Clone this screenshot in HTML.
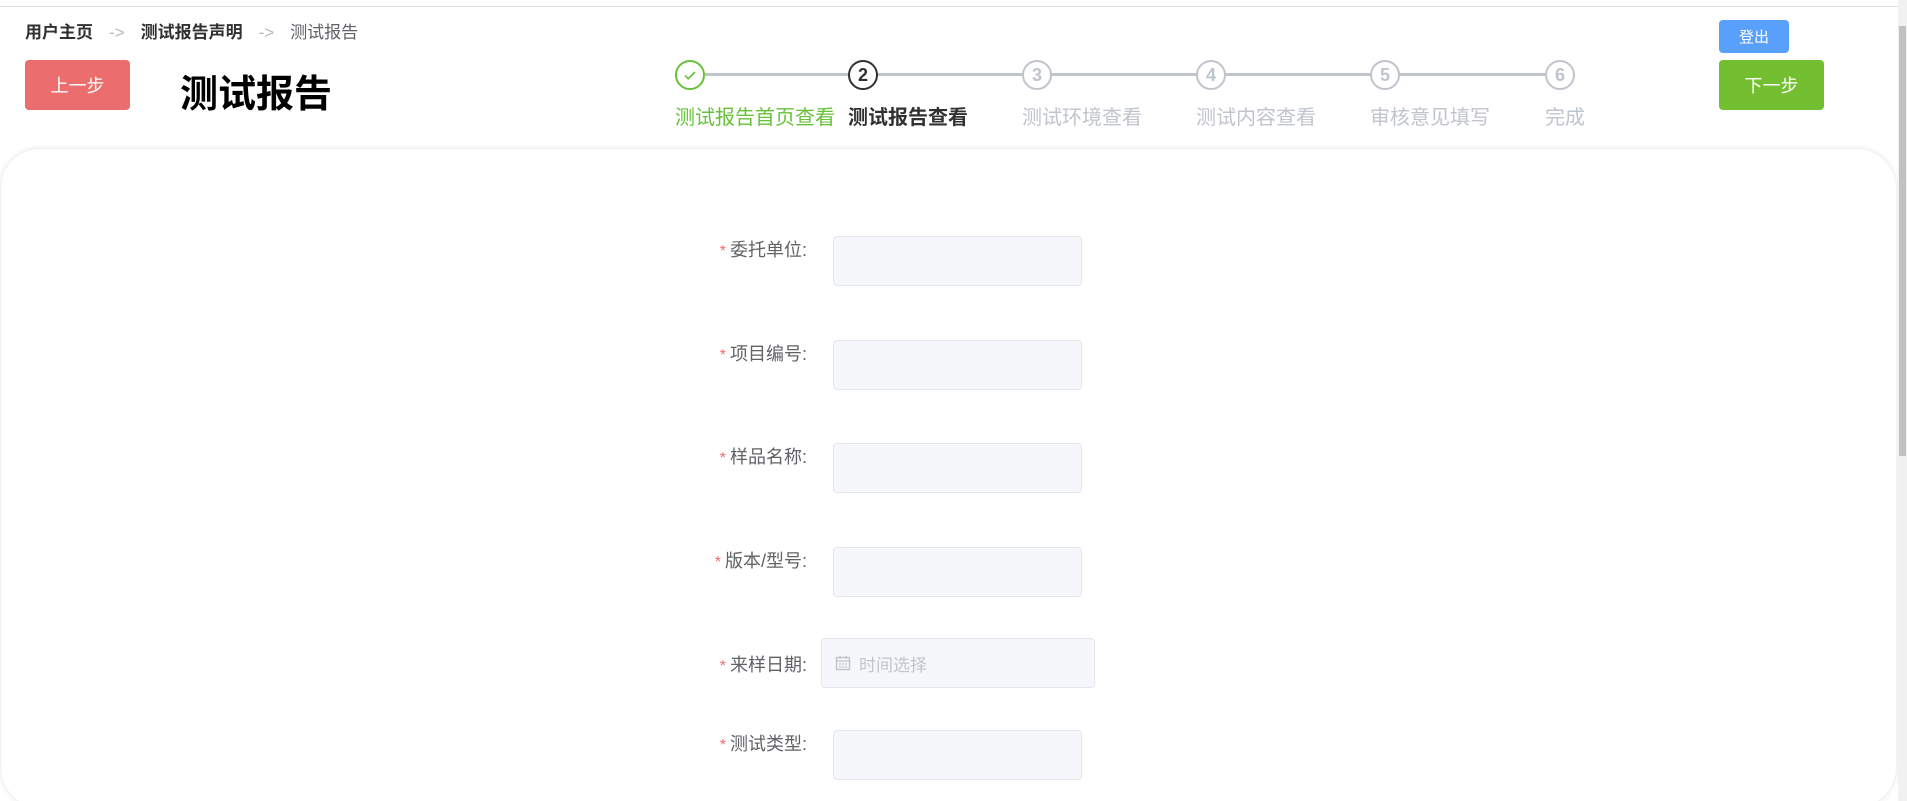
<!DOCTYPE html>
<html><head><meta charset="utf-8"><style>
*{margin:0;padding:0;box-sizing:border-box}
html,body{width:1907px;height:801px;overflow:hidden}
body{background:#fff;font-family:"Liberation Sans","Noto Sans CJK SC",sans-serif;position:relative}
.abs{position:absolute}
.topline{left:0;top:6px;width:1898px;height:1px;background:#ddd}
.bc{left:25px;top:18px;font-size:17px;color:#303133;white-space:nowrap}
.bc b{font-weight:bold}
.bc .ar{color:#b4b8c0;margin:0 16px}
.bc .cur{color:#606266}
.btn{color:#fff;border-radius:4px;display:flex;align-items:center;justify-content:center;font-size:18px}
.title{left:180px;top:63px;font-size:38px;font-weight:bold;color:#000}
.line{height:3px;background:#c0c4cc;top:73px}
.circ{width:30px;height:30px;border-radius:50%;border:2px solid #c0c4cc;top:60px;background:#fff;color:#c0c4cc;font-weight:bold;font-size:18px;display:flex;align-items:center;justify-content:center}
.lab{top:101px;font-size:20px;color:#c0c4cc;white-space:nowrap}
.card{left:0;top:148px;width:1897px;height:660px;border-radius:40px;box-shadow:0 0 6px rgba(0,0,0,0.08);border:1px solid #f0f0f0}
.fl{font-size:18px;color:#606266;text-align:right;width:200px;left:607px}
.fl i{color:#f56c6c;font-style:normal;margin-right:4px;font-size:16px}
.in{left:833px;width:249px;height:50px;background:#f5f7fa;border:1px solid #e4e7ed;border-radius:4px}
.sb{left:1898px;top:0;width:9px;height:801px;background:#f1f1f1}
.th{left:1899px;top:26px;width:7px;height:430px;background:#c1c1c1}
</style></head><body>
<div class="abs topline"></div>
<div class="abs bc"><b>用户主页</b><span class="ar">-&gt;</span><b>测试报告声明</b><span class="ar">-&gt;</span><span class="cur">测试报告</span></div>
<div class="abs btn" style="left:25px;top:60px;width:105px;height:50px;background:#ec6d6d">上一步</div>
<div class="abs title">测试报告</div>
<div class="abs line" style="left:705px;width:840px"></div>
<div class="abs circ" style="left:675px;border-color:#67c23a;color:#67c23a"><svg width="16" height="16" viewBox="0 0 16 16"><path d="M3 8.5l3.2 3.2L13 5" fill="none" stroke="#67c23a" stroke-width="1.6"/></svg></div>
<div class="abs circ" style="left:848px;border-color:#303133;color:#303133">2</div>
<div class="abs circ" style="left:1022px">3</div>
<div class="abs circ" style="left:1196px">4</div>
<div class="abs circ" style="left:1370px">5</div>
<div class="abs circ" style="left:1545px">6</div>
<div class="abs lab" style="left:675px;color:#67c23a">测试报告首页查看</div>
<div class="abs lab" style="left:848px;color:#303133;font-weight:bold">测试报告查看</div>
<div class="abs lab" style="left:1022px">测试环境查看</div>
<div class="abs lab" style="left:1196px">测试内容查看</div>
<div class="abs lab" style="left:1370px">审核意见填写</div>
<div class="abs lab" style="left:1545px">完成</div>
<div class="abs btn" style="left:1719px;top:20px;width:70px;height:33px;background:#58a0fb;font-size:15px">登出</div>
<div class="abs btn" style="left:1719px;top:60px;width:105px;height:50px;background:#73bf31">下一步</div>
<div class="abs card"></div>
<div class="abs fl" style="top:236px"><i>*</i>委托单位:</div>
<div class="abs in" style="top:236px"></div>
<div class="abs fl" style="top:340px"><i>*</i>项目编号:</div>
<div class="abs in" style="top:340px"></div>
<div class="abs fl" style="top:443px"><i>*</i>样品名称:</div>
<div class="abs in" style="top:443px"></div>
<div class="abs fl" style="top:547px"><i>*</i>版本/型号:</div>
<div class="abs in" style="top:547px"></div>
<div class="abs fl" style="top:651px"><i>*</i>来样日期:</div>
<div class="abs in" style="top:638px;left:821px;width:274px;height:50px;display:flex;align-items:center;padding-left:13px;color:#c0c4cc;font-size:17px">
<svg width="16" height="16" viewBox="0 0 16 16" style="margin-right:8px"><rect x="1.5" y="2.5" width="13" height="12" fill="none" stroke="#c0c4cc" stroke-width="1.4"/><path d="M1.5 6h13M4 9h2M7 9h2M10 9h2M4 12h2M7 12h2M10 12h2M5 1v3M11 1v3" stroke="#c0c4cc" stroke-width="1.3"/></svg>时间选择</div>
<div class="abs fl" style="top:730px"><i>*</i>测试类型:</div>
<div class="abs in" style="top:730px"></div>
<div class="abs sb"></div>
<div class="abs th"></div>
</body></html>
